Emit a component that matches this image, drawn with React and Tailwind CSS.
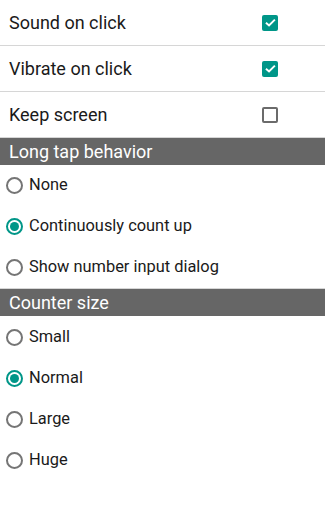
import { useState } from "react";

/* ================= CONTROLS ================= */
function CheckBox({ checked }) {
  if (checked) {
    return (
      <div className="shrink-0 w-[16px] h-[16px] rounded-[2px] bg-[#009688] flex items-center justify-center">
        <svg viewBox="0 0 16 16" className="w-[13px] h-[13px]">
          <path d="M2.4 8.2 L6.2 11.6 L13.4 4.4" fill="none" stroke="white" strokeWidth="2.4" />
        </svg>
      </div>
    );
  }
  return <div className="shrink-0 w-[16px] h-[16px] rounded-[2px] border-2 border-[#6b6b6b]" />;
}

function Radio({ checked }) {
  return (
    <div
      className={
        checked
          ? "shrink-0 w-[17px] h-[17px] rounded-full border-2 border-[#009688] flex items-center justify-center"
          : "shrink-0 w-[17px] h-[17px] rounded-full border-2 border-[#757575]"
      }
    >
      {checked && <div className="w-[9px] h-[9px] rounded-full bg-[#009688]" />}
    </div>
  );
}

function CheckRow({ label, checked, onToggle }) {
  return (
    <div
      onClick={onToggle}
      className="h-[46px] flex items-center justify-between pl-[9px] pr-[47px] border-b border-[#d6d6d6]"
    >
      <span className="text-[18px] text-[#1a1a1a]">{label}</span>
      <CheckBox checked={checked} />
    </div>
  );
}

function Header({ title }) {
  return (
    <div className="h-[27px] bg-[#666666] flex items-center pl-[9px] text-[18px] text-white leading-none">
      {title}
    </div>
  );
}

function RadioGroup({ options, value, onChange }) {
  return (
    <div>
      {options.map((o) => (
        <div
          key={o}
          onClick={() => onChange(o)}
          className="flex items-center gap-[6px] pl-[6px] h-[41px]"
        >
          <Radio checked={value === o} />
          <span className="text-[16.4px] text-[#1a1a1a]">{o}</span>
        </div>
      ))}
    </div>
  );
}

/* ================= APP ================= */
export default function App() {
  const [sound, setSound] = useState(true);
  const [vibrate, setVibrate] = useState(true);
  const [keep, setKeep] = useState(false);
  const [longTap, setLongTap] = useState("Continuously count up");
  const [size, setSize] = useState("Normal");

  return (
    <div
      className="w-[325px] h-[512px] bg-white overflow-hidden"
      style={{ fontFamily: "Roboto, 'Liberation Sans', sans-serif" }}
    >
      <CheckRow label="Sound on click" checked={sound} onToggle={() => setSound(!sound)} />
      <CheckRow label="Vibrate on click" checked={vibrate} onToggle={() => setVibrate(!vibrate)} />
      <CheckRow label="Keep screen" checked={keep} onToggle={() => setKeep(!keep)} />

      <Header title="Long tap behavior" />
      <div className="border-b border-[#d6d6d6]">
        <RadioGroup
          options={["None", "Continuously count up", "Show number input dialog"]}
          value={longTap}
          onChange={setLongTap}
        />
      </div>

      <Header title="Counter size" />
      <div className="pt-[1px]">
        <RadioGroup
          options={["Small", "Normal", "Large", "Huge"]}
          value={size}
          onChange={setSize}
        />
      </div>
    </div>
  );
}
